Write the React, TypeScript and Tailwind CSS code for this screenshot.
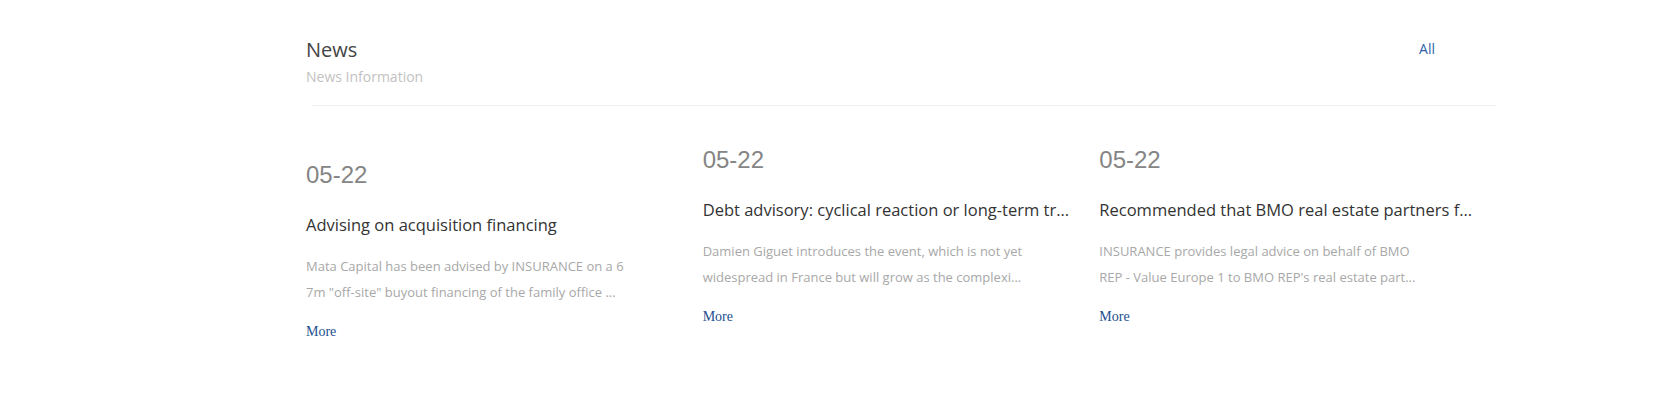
import React from "react";

type Item = {
  date: string;
  title: string;
  lines: [string, string];
  offset: boolean;
};

const items: Item[] = [
  {
    date: "05-22",
    title: "Advising on acquisition financing",
    lines: [
      "Mata Capital has been advised by INSURANCE on a 6",
      "7m \"off-site\" buyout financing of the family office ...",
    ],
    offset: true,
  },
  {
    date: "05-22",
    title: "Debt advisory: cyclical reaction or long-term tr...",
    lines: [
      "Damien Giguet introduces the event, which is not yet",
      "widespread in France but will grow as the complexi...",
    ],
    offset: false,
  },
  {
    date: "05-22",
    title: "Recommended that BMO real estate partners f...",
    lines: [
      "INSURANCE provides legal advice on behalf of BMO",
      "REP - Value Europe 1 to BMO REP's real estate part...",
    ],
    offset: false,
  },
];

function Card({ item }: { item: Item }) {
  return (
    <div className={item.offset ? "pr-[10px] pt-[15px]" : "pr-[10px]"}>
      <div className="font-['Liberation_Sans',Arial,sans-serif] text-[24px] leading-[24px] text-[#858585]">
        {item.date}
      </div>
      <h3 className="mt-[26px] whitespace-nowrap font-['Open_Sans',sans-serif] text-[16.5px] leading-[24px] text-[#333]">
        {item.title}
      </h3>
      <p className="mt-[16px] font-['Open_Sans',sans-serif] text-[13px] leading-[26px] text-[#a8a8a8] whitespace-nowrap">
        {item.lines[0]}
        <br />
        {item.lines[1]}
      </p>
      <a
        href="#"
        className="mt-[17px] block font-['Liberation_Serif','Times_New_Roman',serif] text-[14px] leading-[20px] text-[#1d4f8f]"
      >
        More
      </a>
    </div>
  );
}

export default function App() {
  return (
    <div className="min-h-[408px] w-full bg-white">
      <div className="ml-[306px] w-[1190px] pt-[36px]">
        <div className="flex items-start justify-between">
          <div>
            <h2 className="font-['Open_Sans',sans-serif] text-[20px] leading-[28px] text-[#444]">
              News
            </h2>
            <p className="mt-[3px] font-['Open_Sans',sans-serif] text-[14px] leading-[20px] text-[#c2c2c2]">
              News Information
            </p>
          </div>
          <a
            href="#"
            className="mr-[61px] mt-[3px] font-['Open_Sans',sans-serif] text-[14px] leading-[20px] text-[#2d64a8]"
          >
            All
          </a>
        </div>
        <div className="ml-[6px] mt-[18px] h-[1px] bg-[#efefef] shadow-[0_3px_6px_rgba(0,0,0,0.025)]" />
        <div className="grid grid-cols-3 pt-[42px]">
          {items.map((it, i) => (
            <Card key={i} item={it} />
          ))}
        </div>
      </div>
    </div>
  );
}
